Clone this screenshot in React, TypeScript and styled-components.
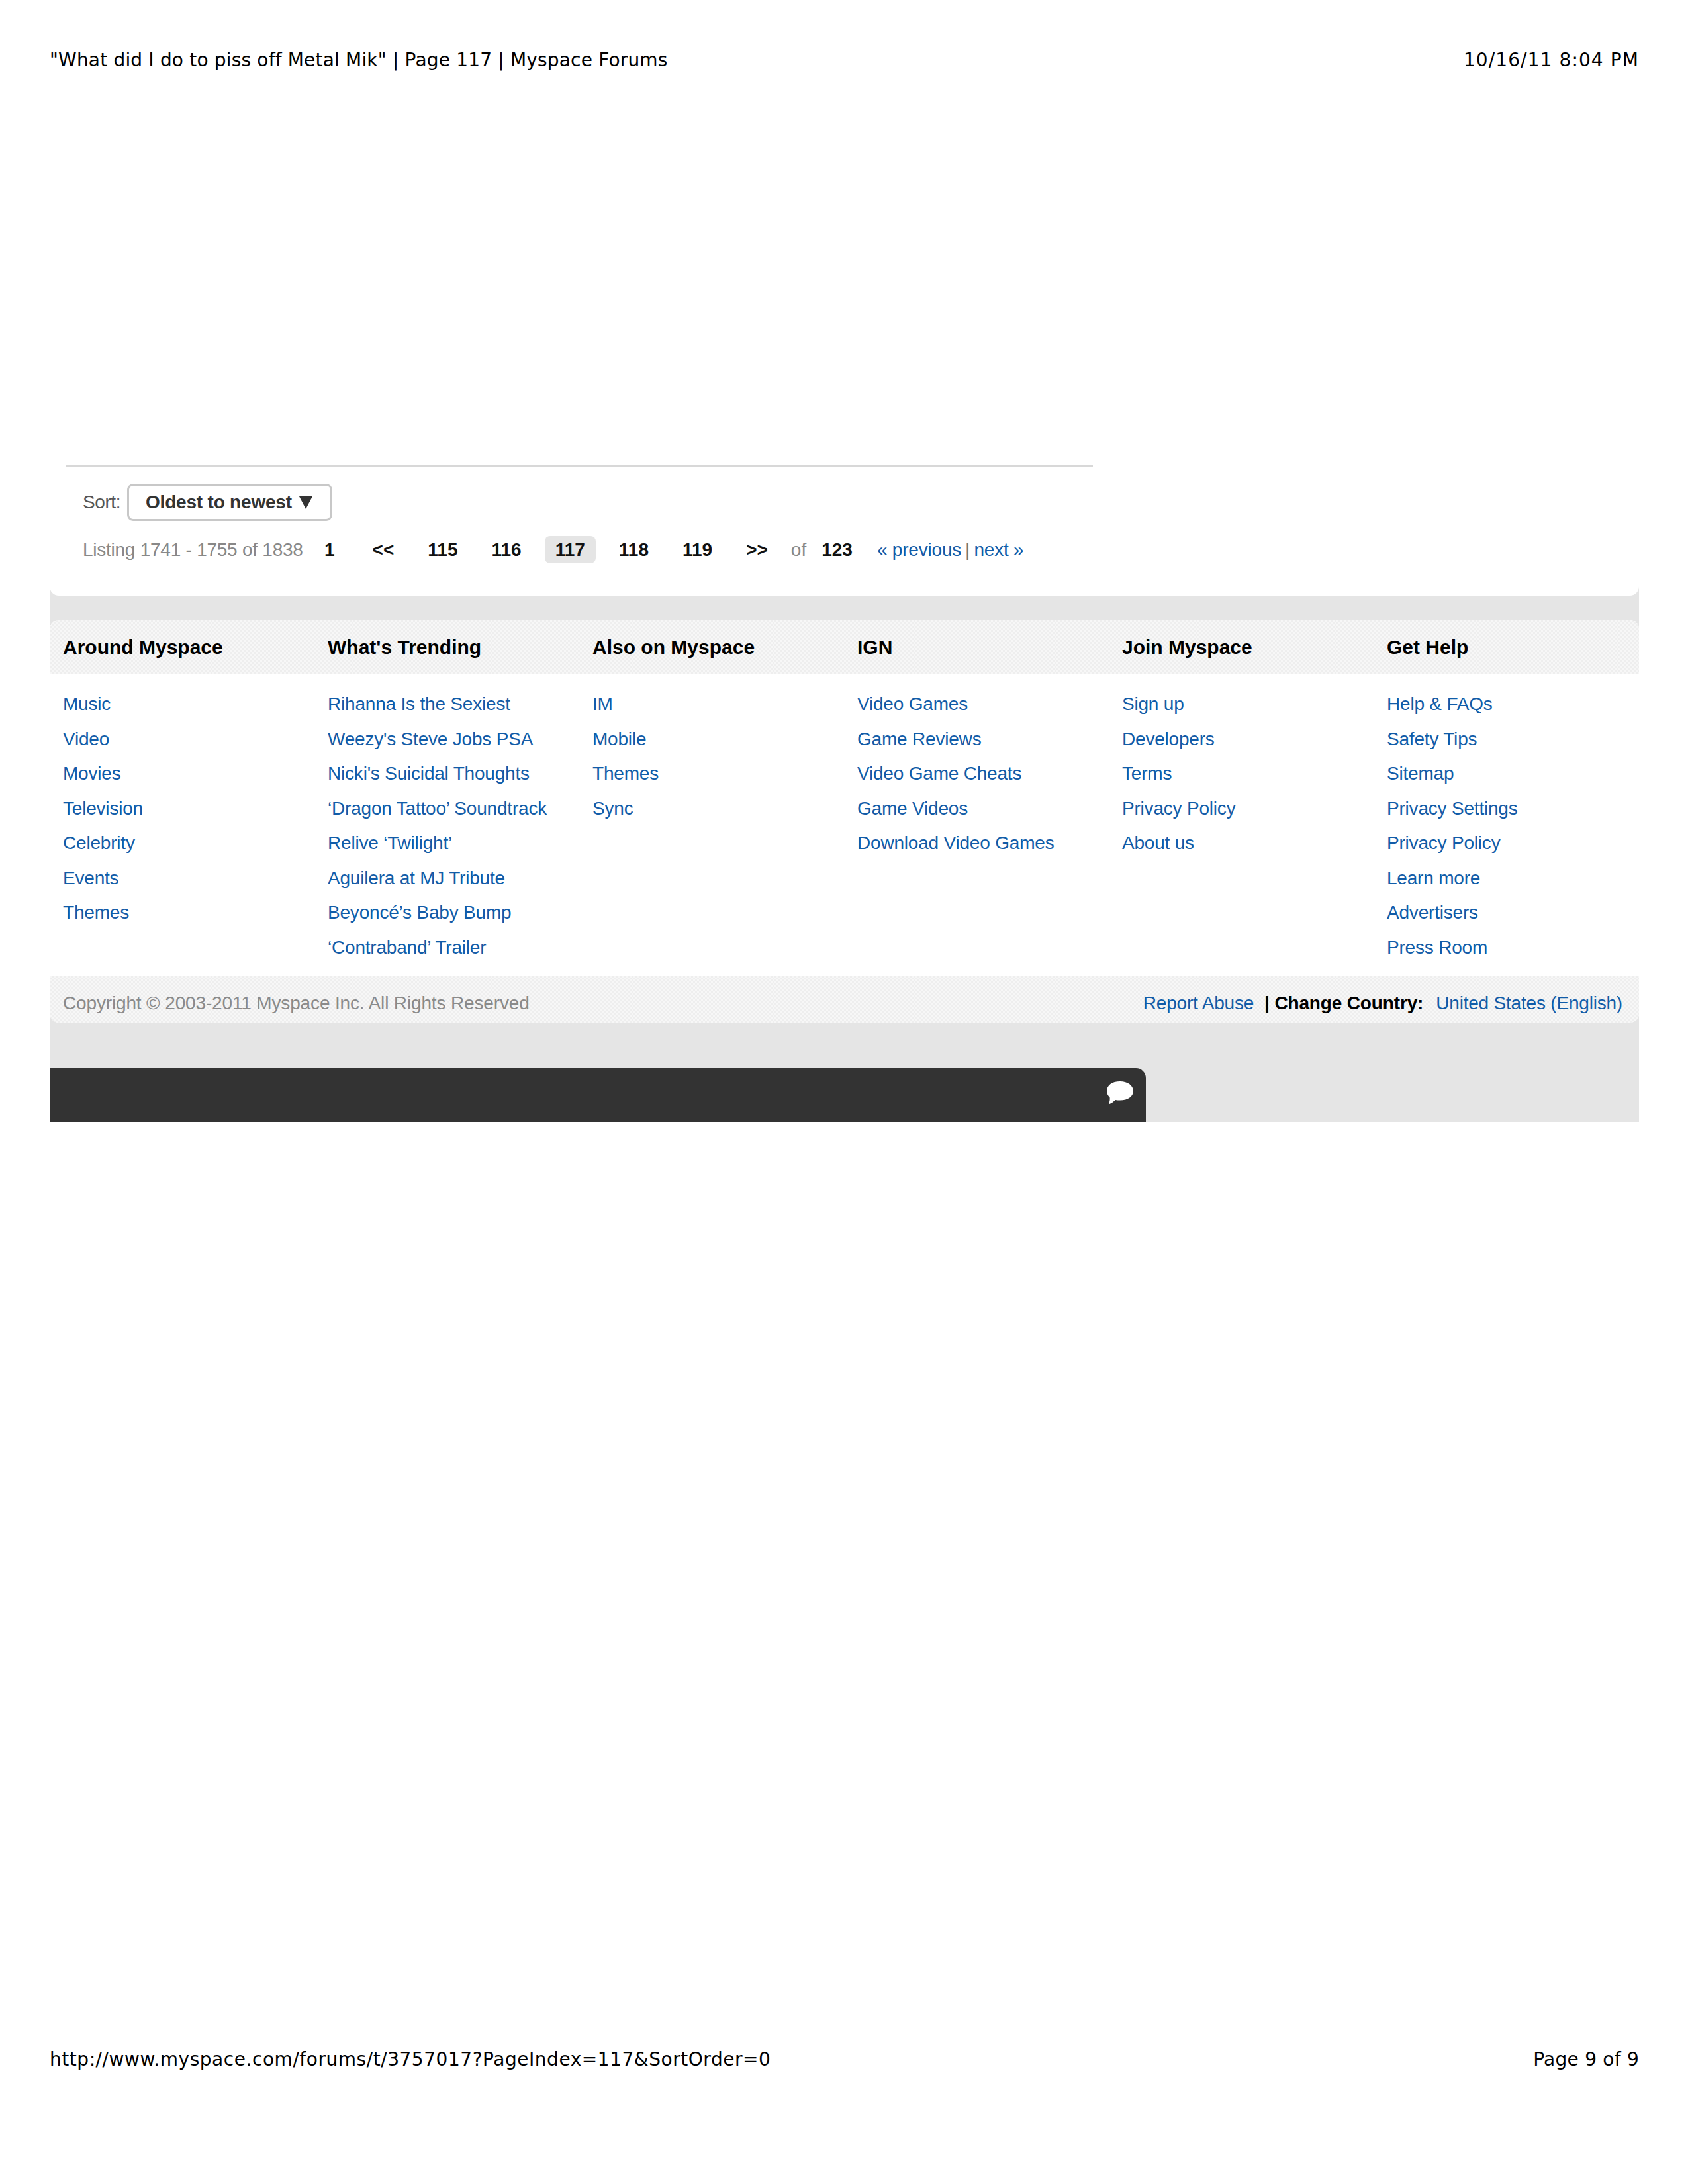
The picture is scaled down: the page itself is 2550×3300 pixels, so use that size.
import React from 'react';
import styled, { createGlobalStyle } from 'styled-components';

const Global = createGlobalStyle`
  html, body { margin: 0; padding: 0; background: #fff; }
  a { text-decoration: none; color: inherit; }
`;

const Sheet = styled.div`
  width: 2550px;
  height: 3300px;
  box-sizing: border-box;
  padding: 74px 74px 0 75px;
  display: flex;
  flex-direction: column;
  font-family: "Liberation Sans", Arial, sans-serif;
  background: #fff;
`;

const PrintLine = styled.div`
  display: flex;
  justify-content: space-between;
  height: 34px;
  line-height: 34px;
  font-family: "DejaVu Sans", sans-serif;
  font-size: 28px;
  color: #000;
`;

const PrintText = styled.span<{ $track: number }>`
  letter-spacing: ${p => p.$track}px;
  white-space: nowrap;
`;

const Frame = styled.div`
  margin-top: 580px;
  background: #e5e5e5;
  display: flex;
  flex-direction: column;
`;

const Panel = styled.div`
  background: #fff;
  height: 197px;
  padding-top: 15px;
  border-radius: 0 0 14px 14px;
  padding-left: 25px;
`;

const Rule = styled.div`
  width: 1551px;
  height: 3px;
  background: #d8d8d8;
`;

const SortRow = styled.div`
  display: flex;
  align-items: center;
  height: 56px;
  margin-top: 25px;
  padding-left: 25px;
`;

const SortLabel = styled.span`
  font-size: 28px;
  color: #555;
  letter-spacing: -0.4px;
  width: 67px;
`;

const SortButton = styled.div`
  width: 310px;
  height: 56px;
  box-sizing: border-box;
  border: 3px solid #c8c8c8;
  border-radius: 9px;
  padding-left: 25px;
  display: flex;
  align-items: center;
  gap: 11px;
  font-size: 28px;
  font-weight: 700;
  letter-spacing: -0.2px;
  color: #333;
`;

const SortArrow = styled.svg`
  width: 20px;
  height: 20px;
  fill: #333;
`;

const PagerRow = styled.div`
  display: flex;
  align-items: center;
  height: 41px;
  margin-top: 23px;
  padding-left: 25px;
  font-size: 28px;
`;

const Listing = styled.span`
  color: #888;
  width: 349px;
  white-space: nowrap;
  letter-spacing: -0.25px;
`;

const PageLink = styled.span<{ $current?: boolean; $after?: number }>`
  font-weight: 700;
  color: #111;
  padding: 0 16px;
  height: 41px;
  line-height: 41px;
  border-radius: 8px;
  margin-right: ${p => p.$after ?? 19}px;
  background: ${p => (p.$current ? '#e5e5e5' : 'transparent')};
`;

const OfLabel = styled.span`
  color: #888;
  margin-left: 19px;
  margin-right: 23px;
`;

const Total = styled.span`
  font-weight: 700;
  color: #111;
  margin-right: 37px;
`;

const BlueLink = styled.a`
  color: #115ca8;
  white-space: nowrap;
  letter-spacing: -0.2px;
`;

const Bar = styled.span`
  color: #777;
  margin: 0 6px;
`;

const Card = styled.div`
  margin-top: 37px;
  background: #fff;
  border-radius: 14px;
  overflow: hidden;
`;

const dither = `
  background-color: #f3f3f3;
  background-image: repeating-conic-gradient(#eeeeee 0 25%, #f7f7f7 0 50%);
  background-size: 6px 6px;
`;

const HeadRow = styled.div`
  ${dither}
  display: grid;
  grid-template-columns: repeat(6, 400px);
  height: 81px;
  align-items: center;
  padding-left: 20px;
`;

const HeadCell = styled.div`
  font-size: 30px;
  font-weight: 700;
  color: #000;
  white-space: nowrap;
`;

const Columns = styled.div`
  display: grid;
  grid-template-columns: repeat(6, 400px);
  padding: 20px 0 16px 20px;
`;

const Column = styled.ul`
  list-style: none;
  margin: 0;
  padding: 0;
  font-size: 28px;
  line-height: 52.5px;
  letter-spacing: -0.2px;
  color: #115ca8;
  height: 420px;
`;

const BottomBand = styled.div`
  ${dither}
  height: 71px;
  display: flex;
  justify-content: space-between;
  align-items: center;
  padding: 12px 25px 0 20px;
  box-sizing: border-box;
  font-size: 28px;
`;

const Copyright = styled.span`
  color: #8a8a8a;
  letter-spacing: -0.15px;
`;

const BandRight = styled.div`
  display: flex;
  align-items: center;
  white-space: nowrap;
`;

const CountryLabel = styled.span`
  font-weight: 700;
  color: #000;
  letter-spacing: -0.15px;
  margin: 0 19px 0 16px;
`;

const DarkBar = styled.div`
  margin-top: 69px;
  width: 1656px;
  height: 81px;
  background: #333;
  border-radius: 0 15px 0 0;
  display: flex;
  align-items: flex-start;
  justify-content: flex-end;
  padding: 19px 18px 0 0;
  box-sizing: border-box;
`;

const Bubble = styled.svg`
  width: 42px;
  height: 36px;
  fill: #fff;
`;

const FootLine = styled(PrintLine)`
  margin-top: auto;
  margin-bottom: 171px;
`;

const heads = ['Around Myspace', "What's Trending", 'Also on Myspace', 'IGN', 'Join Myspace', 'Get Help'];
const cols = [
  ['Music', 'Video', 'Movies', 'Television', 'Celebrity', 'Events', 'Themes'],
  ["Rihanna Is the Sexiest", "Weezy's Steve Jobs PSA", "Nicki's Suicidal Thoughts", "‘Dragon Tattoo’ Soundtrack", "Relive ‘Twilight’", 'Aguilera at MJ Tribute', 'Beyoncé’s Baby Bump', "‘Contraband’ Trailer"],
  ['IM', 'Mobile', 'Themes', 'Sync'],
  ['Video Games', 'Game Reviews', 'Video Game Cheats', 'Game Videos', 'Download Video Games'],
  ['Sign up', 'Developers', 'Terms', 'Privacy Policy', 'About us'],
  ['Help & FAQs', 'Safety Tips', 'Sitemap', 'Privacy Settings', 'Privacy Policy', 'Learn more', 'Advertisers', 'Press Room'],
];

export default function App() {
  return (
    <Sheet>
      <Global />
      <PrintLine>
        <PrintText $track={0.18}>"What did I do to piss off Metal Mik" | Page 117 | Myspace Forums</PrintText>
        <PrintText $track={1.1}>10/16/11 8:04 PM</PrintText>
      </PrintLine>
      <Frame>
        <Panel>
          <Rule />
          <SortRow>
            <SortLabel>Sort:</SortLabel>
            <SortButton>
              Oldest to newest
              <SortArrow viewBox="0 0 20 20"><path d="M0 1h20L10 20z" /></SortArrow>
            </SortButton>
          </SortRow>
          <PagerRow>
            <Listing>Listing 1741 - 1755 of 1838</Listing>
            <PageLink $after={25}>1</PageLink>
            <PageLink>&lt;&lt;</PageLink>
            <PageLink>115</PageLink>
            <PageLink>116</PageLink>
            <PageLink $current>117</PageLink>
            <PageLink>118</PageLink>
            <PageLink>119</PageLink>
            <PageLink $after={0}>&gt;&gt;</PageLink>
            <OfLabel>of</OfLabel>
            <Total>123</Total>
            <BlueLink href="#">« previous</BlueLink>
            <Bar>|</Bar>
            <BlueLink href="#">next »</BlueLink>
          </PagerRow>
        </Panel>
        <Card>
          <HeadRow>
            {heads.map(h => <HeadCell key={h}>{h}</HeadCell>)}
          </HeadRow>
          <Columns>
            {cols.map((c, i) => (
              <Column key={i}>
                {c.map(t => <li key={t}><a href="#">{t}</a></li>)}
              </Column>
            ))}
          </Columns>
          <BottomBand>
            <Copyright>Copyright © 2003-2011 Myspace Inc. All Rights Reserved</Copyright>
            <BandRight>
              <BlueLink href="#">Report Abuse</BlueLink>
              <CountryLabel>| Change Country:</CountryLabel>
              <BlueLink href="#">United States (English)</BlueLink>
            </BandRight>
          </BottomBand>
        </Card>
        <DarkBar>
          <Bubble viewBox="0 0 42 36">
            <path d="M21 1C9 1 1 7 1 15.500c0 4 1.800 7 4.500 9.500.6 3-.2 6.500-1.500 10.500 4-1.500 7.500-4 10-6.500 2 .4 4.500.6 7 .6 12 0 20-6 20-14S33 1 21 1z" />
          </Bubble>
        </DarkBar>
      </Frame>
      <FootLine>
        <PrintText $track={0.54}>http://www.myspace.com/forums/t/3757017?PageIndex=117&amp;SortOrder=0</PrintText>
        <PrintText $track={0.24}>Page 9 of 9</PrintText>
      </FootLine>
    </Sheet>
  );
}
